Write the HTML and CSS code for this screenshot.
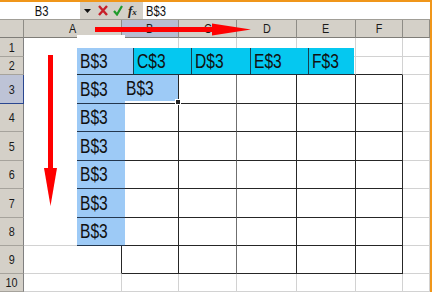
FILE: index.html
```html
<!DOCTYPE html>
<html lang="en">
<head>
    <meta charset="UTF-8">
    <title>Relative row reference</title>
    <link rel="stylesheet" href="styles.css">
</head>
<body>
<div class="window">
    <div class="fbar">
        <div class="namebox"><span class="t">B3</span></div>
        <div class="tools">
            <svg class="drop" width="7" height="4" viewBox="0 0 7 4"><polygon points="0,0 7,0 3.5,4" fill="#111"/></svg>
            <svg class="cancel" width="10" height="11" viewBox="0 0 10 11"><path d="M1 1 L9 10 M9 1 L1 10" stroke="#c8202a" stroke-width="2.4" fill="none"/></svg>
            <svg class="enter" width="10" height="11" viewBox="0 0 10 11"><path d="M1 6 L4 9.5 L9 1" stroke="#1e9a2a" stroke-width="2.2" fill="none"/></svg>
            <span class="fx"><i>f</i><span>x</span></span>
        </div>
        <div class="formula"><span class="t">B$3</span></div>
    </div>

    <div class="sheet">
        <!-- column headers -->
        <div class="c h corner"></div>
        <div class="c h"><span class="t">A</span></div>
        <div class="c h sel"><span class="t">B</span></div>
        <div class="c h"><span class="t">C</span></div>
        <div class="c h"><span class="t">D</span></div>
        <div class="c h"><span class="t">E</span></div>
        <div class="c h"><span class="t">F</span></div>
        <div class="c h"></div>

        <!-- row 1 -->
        <div class="c h rh"><span class="t">1</span></div>
        <div class="c blank"></div>
        <div class="c"></div><div class="c"></div><div class="c"></div><div class="c"></div><div class="c"></div><div class="c"></div>

        <!-- row 2 -->
        <div class="c h rh"><span class="t">2</span></div>
        <div class="c blank">
            <div class="band">
                <div class="bc lite"><span class="t">B$3</span></div>
                <div class="bc"><span class="t">C$3</span></div>
                <div class="bc"><span class="t">D$3</span></div>
                <div class="bc"><span class="t">E$3</span></div>
                <div class="bc"><span class="t">F$3</span></div>
            </div>
        </div>
        <div class="c bb"></div><div class="c bb"></div><div class="c bb"></div><div class="c bb"></div><div class="c bb"></div><div class="c"></div>

        <!-- row 3 -->
        <div class="c h rh sel"><span class="t">3</span></div>
        <div class="c blank edge"><div class="lbl"><span class="t">B$3</span></div></div>
        <div class="c b"><div class="lbl2"><span class="t">B$3</span><span class="handle"></span></div></div>
        <div class="c b mid"></div><div class="c b"></div><div class="c b"></div><div class="c b"></div><div class="c"></div>

        <!-- row 4 -->
        <div class="c h rh"><span class="t">4</span></div>
        <div class="c blank edge"><div class="lbl"><span class="t">B$3</span></div></div>
        <div class="c b"></div><div class="c b mid"></div><div class="c b"></div><div class="c b"></div><div class="c b"></div><div class="c"></div>

        <!-- row 5 -->
        <div class="c h rh"><span class="t">5</span></div>
        <div class="c blank edge"><div class="lbl"><span class="t">B$3</span></div></div>
        <div class="c b"></div><div class="c b mid"></div><div class="c b"></div><div class="c b"></div><div class="c b"></div><div class="c"></div>

        <!-- row 6 -->
        <div class="c h rh"><span class="t">6</span></div>
        <div class="c blank edge"><div class="lbl"><span class="t">B$3</span></div></div>
        <div class="c b"></div><div class="c b mid"></div><div class="c b"></div><div class="c b"></div><div class="c b"></div><div class="c"></div>

        <!-- row 7 -->
        <div class="c h rh"><span class="t">7</span></div>
        <div class="c blank edge"><div class="lbl"><span class="t">B$3</span></div></div>
        <div class="c b"></div><div class="c b mid"></div><div class="c b"></div><div class="c b"></div><div class="c b"></div><div class="c"></div>

        <!-- row 8 -->
        <div class="c h rh"><span class="t">8</span></div>
        <div class="c edge"><div class="lbl"><span class="t">B$3</span></div></div>
        <div class="c b"></div><div class="c b mid"></div><div class="c b"></div><div class="c b"></div><div class="c b"></div><div class="c"></div>

        <!-- row 9 -->
        <div class="c h rh"><span class="t">9</span></div>
        <div class="c edge"></div>
        <div class="c b"></div><div class="c b mid"></div><div class="c b"></div><div class="c b"></div><div class="c b"></div><div class="c"></div>

        <!-- row 10 -->
        <div class="c h rh"><span class="t">10</span></div>
        <div class="c"></div><div class="c"></div><div class="c"></div><div class="c"></div><div class="c"></div><div class="c"></div><div class="c"></div>
    </div>

    <!-- red direction arrows drawn over the sheet -->
    <svg class="arrows" width="432" height="292" viewBox="0 0 432 292">
        <rect x="95" y="27" width="120" height="5" fill="#f00"/>
        <polygon points="212,23.5 251,29.5 212,35.5" fill="#f00"/>
        <rect x="48" y="55" width="5" height="116" fill="#f00"/>
        <polygon points="44,168 50.5,206 57,168" fill="#f00"/>
    </svg>
</div>
</body>
</html>
```

FILE: styles.css
```css
* {
    box-sizing: border-box;
}

body {
    margin: 0;
    font-family: "Liberation Sans", Arial, sans-serif;
    color: #111;
    background-color: #fff;
}

.window {
    position: relative;
    width: 432px;
    height: 292px;
    border-top: 2px solid #f0961a;
    border-right: 2px solid #f0961a;
    overflow: hidden;
}

/* the screenshot text is squeezed sideways */
.t {
    display: inline-block;
    transform: scaleX(.8);
    white-space: nowrap;
}

/* formula bar */
.fbar {
    display: flex;
    height: 18px;
    background-color: #d4d0c8;
    border-bottom: 1px solid #a19e97;
}

.namebox {
    width: 80px;
    background-color: #fff;
    display: flex;
    align-items: center;
    justify-content: center;
    padding-left: 4px;
    font-size: 14px;
}

.tools {
    width: 63px;
    display: flex;
    align-items: center;
    padding-left: 4px;
}

.cancel {
    margin-left: 7px;
}

.enter {
    margin-left: 5px;
}

.fx {
    margin-left: 5px;
    font-family: "Liberation Serif", serif;
    font-weight: bold;
    font-size: 13px;
    color: #222;
}

.fx span {
    font-size: 9px;
    font-style: italic;
}

.formula {
    flex: 1;
    background-color: #fff;
    display: flex;
    align-items: center;
    padding-left: 3px;
    font-size: 14px;
}

.formula .t {
    transform-origin: 0 50%;
}

/* sheet grid */
.sheet {
    display: grid;
    grid-template-columns: 24px 98px 57px 58px 60px 59px 47px 27px;
    grid-template-rows: 18px 19px 18px 29px 28px 29px 28px 29px 28px 28px 18px;
}

.c {
    display: flex;
    align-items: center;
    min-width: 0;
    border-right: 1px solid #d2d2d2;
    border-bottom: 1px solid #d2d2d2;
}

.h {
    background-color: #d4d0c8;
    border-right-color: #8e8c86;
    border-bottom-color: #7f7d78;
    justify-content: center;
    font-size: 13.5px;
    color: #1a1a1a;
}

.rh {
    border-right-color: #808080;
    border-bottom-color: #a6a39c;
}

.h.sel {
    background-color: #b7bdd1;
}

.rh.sel {
    background-color: #bdc3d6;
    border-right-color: #2a4790;
    border-bottom-color: #2a4790;
}

.blank {
    border-bottom-color: #fff;
}

.bb {
    border-bottom-color: #262626;
}

.b {
    border-color: #262626;
}

.mid {
    border-right-color: #6f6f6f;
}

.edge {
    border-right-color: #262626;
}

/* pasted row of labels */
.band {
    position: relative;
    display: grid;
    grid-template-columns: 56px 58px 59px 58px 46px;
    flex-shrink: 0;
    align-self: flex-end;
    height: 27px;
    margin-left: 53px;
    margin-bottom: -1px;
    border-bottom: 1px solid #1f2f3a;
}

.bc {
    display: flex;
    align-items: center;
    padding-left: 3px;
    font-size: 19.5px;
    background-color: #05c8f0;
    border-left: 1px solid #1a3f4f;
}

.bc .t,
.lbl .t,
.lbl2 .t {
    transform-origin: 0 50%;
}

.bc.lite {
    background-color: #9dcaf6;
    border-left: 0;
}

.bc.lite::before {
    content: "";
    position: absolute;
    left: 0;
    top: -13px;
    width: 48px;
    height: 13px;
    background-color: #fff;
}

/* pasted column of labels */
.lbl {
    position: relative;
    flex-shrink: 0;
    align-self: stretch;
    width: 48px;
    margin-left: 53px;
    margin-bottom: -1px;
    padding-left: 3px;
    display: flex;
    align-items: center;
    font-size: 19.5px;
    background-color: #9dcaf6;
    border-bottom: 1px solid #23374f;
}

.lbl2 {
    position: relative;
    flex: 1;
    align-self: stretch;
    margin-left: 3px;
    padding-left: 1px;
    display: flex;
    align-items: center;
    font-size: 19.5px;
    background-color: #9dcaf6;
    border-bottom: 2px solid #fff;
}

.handle {
    position: absolute;
    right: -3px;
    bottom: -4px;
    width: 6px;
    height: 6px;
    background-color: #222;
    border: 1px solid #fff;
}

.arrows {
    position: absolute;
    top: -2px;
    left: 0;
    pointer-events: none;
}
```
